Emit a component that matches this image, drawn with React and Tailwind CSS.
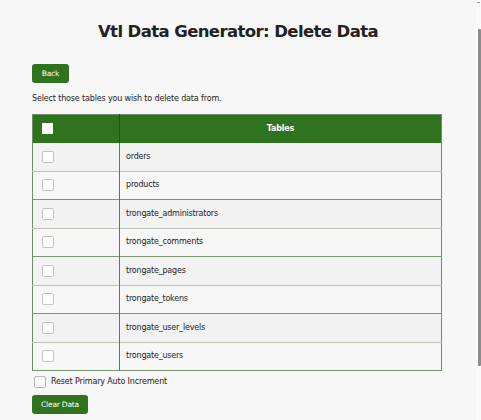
import React from "react";

const tables = [
  "orders",
  "products",
  "trongate_administrators",
  "trongate_comments",
  "trongate_pages",
  "trongate_tokens",
  "trongate_user_levels",
  "trongate_users",
];

export default function App() {
  return (
    <div className="flex w-[481px] h-[420px] bg-[#f7f7f7] overflow-hidden font-['DejaVu_Sans',sans-serif] text-[#222]">
      <div className="w-[476px] flex flex-col">
        <h1 className="mt-[20px] text-center text-[16.5px] leading-[24px] font-bold text-[#222] tracking-[-0.6px]">
          Vtl Data Generator: Delete Data
        </h1>
        <div className="px-[32px] flex flex-col">
          <button className="mt-[20px] w-[37px] h-[19px] rounded-[3px] bg-[#2f731f] text-white text-[7.5px] tracking-[-0.2px] leading-[19px] text-center">
            Back
          </button>
          <p className="mt-[10px] text-[8px] tracking-[-0.15px] leading-[12px] text-[#222]">
            Select those tables you wish to delete data from.
          </p>
          <table className="mt-[9px] w-[410px] border-collapse border border-[#6e8c67] text-[8px] tracking-[-0.2px]">
            <thead>
              <tr className="h-[28px] bg-[#2f731f]">
                <th className="w-[87px] border-r border-[#21521a] pl-[9px] text-left align-middle">
                  <span className="inline-block w-[11px] h-[11px] bg-white mt-[4px]" />
                </th>
                <th className="text-white font-bold text-center">Tables</th>
              </tr>
            </thead>
            <tbody>
              {tables.map((t, i) => (
                <tr
                  key={t}
                  className={
                    (i % 2 === 0 ? "bg-[#f2f2f2]" : "bg-[#f7f7f7]") +
                    " h-[28.5px] border-b " +
                    (i % 2 === 0 ? "border-[#b9c4b5]" : "border-[#7b9575]")
                  }
                >
                  <td className="border-r border-[#5d7a57] pl-[9px] align-middle">
                    <span className="inline-block w-[12px] h-[12px] bg-white border border-[#c4c4c4] rounded-[2px] mt-[4px]" />
                  </td>
                  <td className="pl-[6px] align-middle text-[#222]">{t}</td>
                </tr>
              ))}
            </tbody>
          </table>
          <label className="mt-[5px] ml-[2px] flex items-center gap-[5px] text-[8px] tracking-[-0.15px] leading-[12px]">
            <span className="inline-block w-[12px] h-[12px] bg-white border border-[#b5b5b5] rounded-[2px]" />
            Reset Primary Auto Increment
          </label>
          <button className="mt-[7px] w-[56px] h-[19px] rounded-[3px] bg-[#2f731f] text-white text-[7.5px] tracking-[-0.2px] leading-[19px] text-center">
            Clear Data
          </button>
        </div>
      </div>
      <div className="w-[5px] h-full bg-[#fbfbfb] flex flex-col items-center">
        <span className="mt-[2px] w-[3px] h-[1px] bg-[#909090]" />
        <div className="mt-[26px] w-[3px] h-[337px] bg-[#8c8c8c] rounded-[1px] self-end" />
      </div>
    </div>
  );
}
